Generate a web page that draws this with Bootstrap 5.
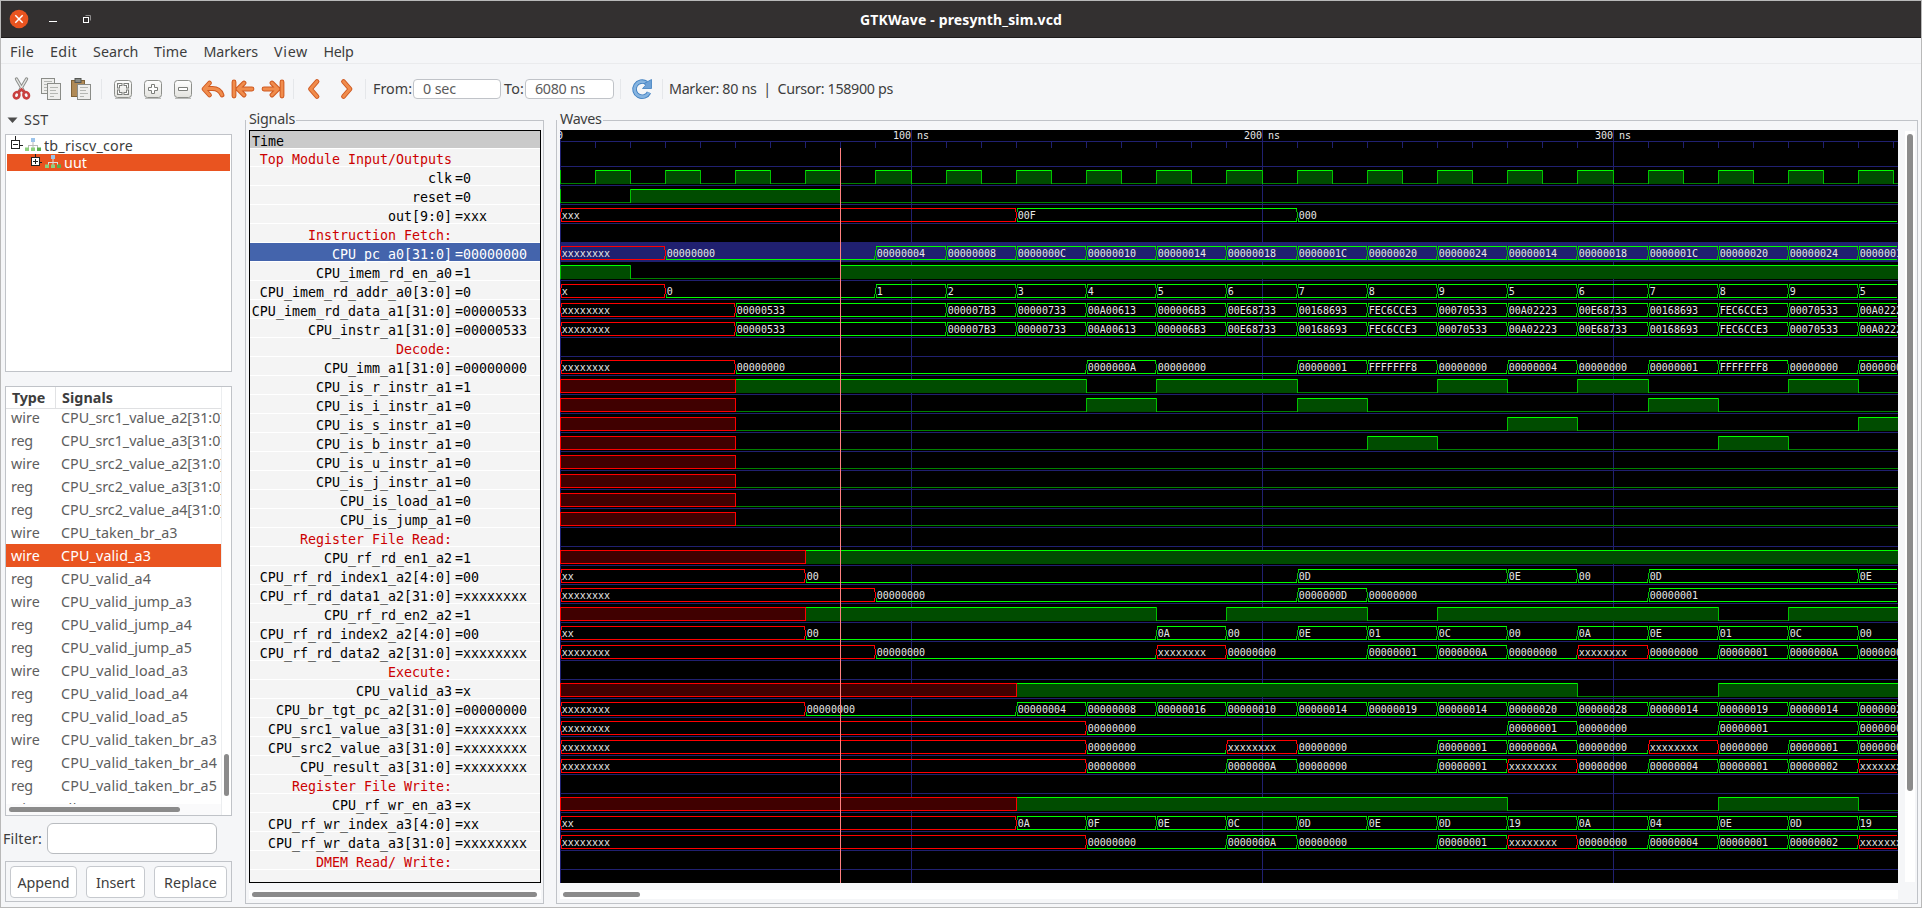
<!DOCTYPE html>
<html lang="en">
<head>
<meta charset="utf-8">
<title>GTKWave - presynth_sim.vcd</title>
<link href="https://cdn.jsdelivr.net/npm/bootstrap@5.3.0/dist/css/bootstrap.min.css" rel="stylesheet">
<script src="https://cdn.jsdelivr.net/npm/bootstrap@5.3.0/dist/js/bootstrap.bundle.min.js"></script>
<style>
  :root { --win:#f5f6f8; --line:#c0c3c8; --ink:#3d3d3d; --orange:#e95420; }
  body { width:1922px; height:908px; overflow:hidden; background:var(--win); color:var(--ink);
         font-family:"Noto Sans","Open Sans",sans-serif; font-size:14.3px; line-height:20px; }
  .window { width:1922px; height:908px; border:1px solid #b9b9b9; }
  .titlebar { height:37px; background:#333030; border-bottom:1px solid #1d1b1b; color:#fff; }
  .titlebar .title { left:859px; top:9px; font-weight:700; font-size:14px; }
  .menus { height:26px; border-bottom:1px solid #eaebed; }
  .menus span { line-height:27px; height:25px; }
  .tools { height:44px; }
  .tools > .fit, .tools > .entry, .tools > .vsep { margin-top:5px; }
  .tools svg, .titlebar svg { display:block; flex:none; }
  .vsep { width:1px; height:20px; background:#e5e7ea; flex:none; }
  .entry { height:20px; border:1px solid var(--line); border-radius:4px; background:#fff; color:#5c5c5c; line-height:18px; padding-left:9px; flex:none; }
  .fit { white-space:pre; display:inline-block; flex:none; }
  .side { width:244px; flex:none; padding-left:4px; }
  .sst { height:26px; }
  .tree { width:227px; height:238px; border:1px solid var(--line); background:#fff; padding:1px 1px 0 1px; }
  .tree .node { height:17px; }
  .tree .node.sel { height:17px; margin-top:1px; background:var(--orange); color:#fff; }
  .siglist { width:227px; height:430px; margin-top:14px; border:1px solid var(--line); background:#fff; }
  .siglist .hd { height:22px; border-bottom:1px solid #dfe0e2; font-weight:700; line-height:22px; }
  .siglist .hd .c1 { width:50px; padding-left:6px; border-right:1px solid #e1e2e4; }
  .siglist .rows { height:395px; overflow:hidden; color:#5e5e5e; }
  .siglist .rows > div { height:23px; line-height:24px; }
  .siglist .rows > div:first-child { margin-top:-3px; }
  .siglist .rows .c1 { width:55px; padding-left:5px; flex:none; }
  .siglist .rows .sel { background:var(--orange); color:#fff; }
  .vtrack { width:10px; background:#fff; border-left:1px solid #eceef0; flex:none; }
  .thumb { background:#8b8b8b; border-radius:3px; }
  .btnbox { width:227px; height:41px; border:1px solid var(--line); margin-top:7px; padding:4px 4px; }
  .gbtn { height:32px; border:1px solid #c6c9ce; border-radius:4px; background:#fff; color:var(--ink); padding:0; line-height:27px; text-align:center; }
  .pane { border:1px solid var(--line); margin-top:12px; height:784px; flex:none; }
  .pane .cap { background:var(--win); height:20px; margin-top:-14px; padding:0 1px; align-self:flex-start; line-height:24px; }
  .names { width:292px; height:753px; border:1px solid #000; background:#f4f4f4; margin:3px 0 0 3px;
           font-family:"DejaVu Sans Mono",monospace; font-size:13.3px; color:#000; }
  .names > div { height:19px; line-height:23px; border-bottom:1px solid #fff; white-space:pre; }
  .names .nm { width:202px; text-align:right; margin-right:3px; flex:none; }
  .names > .time { height:18px; line-height:21px; background:#cacaca; padding-left:2px; }
  .names > .short { height:18px; line-height:21px; }
  .names .cm { color:#cc0000; }
  .names .sel { background:#4464ac; color:#fff; }
  .wave text { font-family:"DejaVu Sans Mono",monospace; font-size:10px; fill:#e8e8e8; white-space:pre; }
  .track { background:#fff; height:9px; padding:2px 3px; }
</style>
</head>
<body>
<div class="window d-flex flex-column">
  <header class="titlebar position-relative d-flex align-items-center">
    <svg width="100" height="36" viewBox="1 1 100 36">
      <circle cx="19" cy="19" r="9.3" fill="#e95420"/>
      <path d="M15.3 15.3l7.4 7.4M22.7 15.3l-7.4 7.4" stroke="#fff" stroke-width="1.5"/>
      <path d="M49 21.5h8" stroke="#fff"/>
      <path d="M85.5 15.5h5v5" fill="none" stroke="#8f8d8d"/><rect x="83.5" y="17.5" width="5" height="5" fill="none" stroke="#fff"/>
    </svg>
    <span class="title fit position-absolute" data-w="202">GTKWave - presynth_sim.vcd</span>
  </header>
  <nav class="menus d-flex" id="menus"></nav>
  <div class="tools d-flex align-items-center" id="tools">
    <svg width="370" height="44" viewBox="1 64 370 44">
      <defs>
        <linearGradient id="kb" x1="0" y1="0" x2="0" y2="1"><stop offset="0" stop-color="#fff"/><stop offset="1" stop-color="#e2e2de"/></linearGradient>
      </defs>
      <!-- cut -->
      <path d="M16.5 79l7 12M26.5 79l-7 12" stroke="#8c8e8b" stroke-width="3.4" stroke-linecap="round"/>
      <path d="M16.5 79l7 12M26.5 79l-7 12" stroke="#e6e7e5" stroke-width="1.4" stroke-linecap="round"/>
      <g fill="none" stroke="#c9403f" stroke-width="2.6"><ellipse cx="16.6" cy="95.2" rx="2.7" ry="3.2" transform="rotate(25 16.6 95.2)"/><ellipse cx="26.2" cy="95.2" rx="2.7" ry="3.2" transform="rotate(-25 26.2 95.2)"/><path d="M18.5 92l3-2.5 3 2.5"/></g>
      <!-- copy -->
      <g stroke="#8a8c88" fill="#eeeeec"><rect x="41.5" y="78.5" width="13" height="15"/><rect x="47.5" y="83.5" width="13" height="16"/></g>
      <path d="M44 81.5h8M44 84.5h3M44 87.5h3M44 90.5h3M50 87.5h8M50 90.5h6M50 93.5h8M50 96.5h4" stroke="#b4b6b2"/>
      <!-- paste -->
      <rect x="71.5" y="80.5" width="13" height="16" fill="#b08a56" stroke="#7f6238"/><rect x="75" y="78.5" width="6" height="4" fill="#8a8c88" stroke="#555753"/>
      <rect x="77.5" y="84.5" width="13" height="15" fill="#eeeeec" stroke="#8a8c88"/><path d="M80 87.5h8M80 90.5h6M80 93.5h8M80 96.5h4" stroke="#b4b6b2"/>
      <path d="M101.5 79v20M293.5 79v20M365.5 79v20" stroke="#e5e7ea"/>
      <!-- zoom fit / in / out -->
      <g fill="url(#kb)" stroke="#8d8f8b"><rect x="114.5" y="80.5" width="17" height="17" rx="3"/><rect x="144.5" y="80.5" width="17" height="17" rx="3"/><rect x="174.5" y="80.5" width="17" height="17" rx="3"/></g>
      <path d="M115 98.5h16M145 98.5h16M175 98.5h16" stroke="#b9bab8"/>
      <g fill="none" stroke-linecap="square"><path id="fitc" d="M118.500 87v-2.500h2.500M125 84.500h2.500v2.500M118.500 91v2.500h2.500M125 93.500h2.500v-2.500" stroke="#7c7e7a" stroke-width="3"/><path d="M118.500 87v-2.500h2.500M125 84.500h2.500v2.500M118.500 91v2.500h2.500M125 93.500h2.500v-2.500" stroke="#fff" stroke-width="1"/></g>
      <g fill="#fff" stroke="#7c7e7a"><path d="M151.500 84.500h3v3h3v3h-3v3h-3v-3h-3v-3h3zM178.500 87.500h9v3h-9z"/></g>
      <!-- history and edge arrows -->
      <g fill="none" stroke-linecap="round" stroke-linejoin="round">
        <g stroke="#cf5a22" stroke-width="4.8"><path d="M209.500 83l-5.500 6 5.500 6M205 88.500h7.500q7 0 9.500 6.500"/><path d="M234 82v14M244 83l-6 6 6 6M239 89h13M282 82v14M272 83l6 6-6 6M277 89h-13"/><path d="M317 81.500l-6.500 7.500 6.500 7.500M343.500 81.500l6.500 7.500-6.500 7.500"/></g>
        <g stroke="#f08c4c" stroke-width="2.800"><path d="M209.500 83l-5.500 6 5.500 6M205 88.500h7.500q7 0 9.500 6.500"/><path d="M234 82v14M244 83l-6 6 6 6M239 89h13M282 82v14M272 83l6 6-6 6M277 89h-13"/><path d="M317 81.500l-6.500 7.500 6.500 7.500M343.500 81.500l6.500 7.500-6.500 7.500"/></g>
      </g>
    </svg>
    <span class="fit" data-w="39" style="margin-left:2px">From:</span>
    <div class="entry" style="width:88px;margin-left:1px"><span class="fit" data-w="33">0 sec</span></div>
    <span class="fit" data-w="20" style="margin-left:3px">To:</span>
    <div class="entry" style="width:89px;margin-left:1px"><span class="fit" data-w="50">6080 ns</span></div>
    <span class="vsep" style="margin-left:6px"></span>
    <svg width="24" height="24" viewBox="0 0 24 24" style="margin-left:9px;margin-top:6px">
      <path d="M19 15.500a7.600 7.600 0 1 1-2.500-9.600" fill="none" stroke="#3f7fc0" stroke-width="4.600"/>
      <path d="M19 15.500a7.600 7.600 0 1 1-2.500-9.600" fill="none" stroke="#86b4e0" stroke-width="2.800"/>
      <path d="M21.500 2.500v9h-9l3-3.200-1-2z" fill="#6da1d6" stroke="#3f7fc0" stroke-width=".8"/>
    </svg>
    <span class="vsep" style="margin-left:8px"></span>
    <span class="fit" data-w="224" style="margin-left:6px">Marker: 80 ns  |  Cursor: 158900 ps</span>
  </div>

  <main class="d-flex">
    <aside class="side">
      <div class="sst d-flex align-items-center"><svg width="15" height="12" style="margin-left:1px;margin-top:-3px"><path d="M1.500 3.500h10l-5 5.500z" fill="#4c4c4c"/></svg><span class="fit" data-w="24.500" style="margin-left:3px;margin-top:-2px">SST</span></div>
      <div class="tree" id="tree">
        <div class="node d-flex"><svg width="36" height="17" viewBox="7 136 36 17" class="flex-shrink-0"><path d="M15.500 136v4M20 145.500h3" stroke="#222"/><rect x="11.500" y="140.500" width="8" height="8" fill="#fff" stroke="#222"/><path d="M13 144.500h5" stroke="#222"/><g transform="translate(25 138)"><path d="M3 7.500h10M8 4v6M3.500 7v3M12.500 7v3" stroke="#bbb"/><rect x="6" width="4" height="4" fill="#9cc4ec"/><path d="M0 9.500h4v3.500H0zM6 9.500h4v3.500H6z" fill="#8ed07e"/><path d="M12 9.500h4v3.500h-4z" fill="#5cae4c"/></g></svg><span class="fit" data-w="89" style="margin-left:1px;line-height:20px">tb_riscv_core</span></div>
        <div class="node sel d-flex position-relative"><svg width="56" height="17" viewBox="7 154 56 17" class="flex-shrink-0"><path d="M35.500 154v3M39 162.500h3" stroke="#222"/><rect x="31.500" y="157.500" width="8" height="8" fill="#fff" stroke="#222"/><path d="M33 161.500h5M35.500 159v5" stroke="#222"/><g transform="translate(45 155)"><path d="M3 7.500h10M8 4v6M3.500 7v3M12.500 7v3" stroke="#ddd"/><rect x="6" width="4" height="4" fill="#9cc4ec"/><path d="M0 9.500h4v3.500H0zM6 9.500h4v3.500H6z" fill="#8ed07e"/><path d="M12 9.500h4v3.500h-4z" fill="#5cae4c"/></g></svg><span class="fit" data-w="23" style="margin-left:1px;line-height:18px">uut</span></div>
      </div>
      <div class="siglist d-flex">
        <div class="flex-grow-1 overflow-hidden">
          <div class="hd d-flex"><div class="c1"><span class="fit" data-w="33">Type</span></div><span class="fit" data-w="51" style="margin-left:6px">Signals</span></div>
          <div class="rows" id="rows"></div>
          <div style="height:11px;background:#fafafb;padding:3px 0 0 3px"><div class="thumb" style="width:171px;height:5px"></div></div>
        </div>
        <div class="vtrack"><div class="thumb" style="width:5px;height:42px;margin:367px 0 0 2px"></div></div>
      </div>
      <div class="d-flex align-items-center" style="margin:7px 0 0 -2px;height:31px"><span class="fit" data-w="39">Filter:</span><div class="bg-white rounded" style="width:170px;height:31px;margin-left:5px;border:1px solid #b9bcc0"></div></div>
      <div class="btnbox d-flex" id="btns"></div>
    </aside>

    <section class="pane d-flex flex-column" style="width:299px">
      <div class="cap"><span class="fit" data-w="46" style="margin-left:2px">Signals</span></div>
      <div class="names flex-shrink-0" id="names"></div>
      <div class="track" style="width:292px;margin:7px 0 0 3px"><div class="thumb" style="height:5px;width:285px"></div></div>
    </section>

    <section class="pane d-flex flex-column" style="width:1362px;margin-left:12px">
      <div class="cap"><span class="fit" data-w="41.500" style="margin-left:2px">Waves</span></div>
      <div class="d-flex" style="margin:3px 0 0 3px">
        <div>
          <svg class="wave d-block" id="wave" width="1338" height="753" viewBox="560 130 1338 753"></svg>
          <div class="track" style="width:1338px;margin-top:7px"><div class="thumb" style="height:5px;width:77px"></div></div>
        </div>
        <div class="bg-white" style="width:10px;height:751px;margin:1px 0 0 7px;padding:3px 2px"><div class="thumb" style="width:6px;height:657px"></div></div>
      </div>
    </section>
  </main>
</div>

<script>
const H = s => s.replace(/&/g, '&amp;').replace(/</g, '&lt;');

// menu bar: label, left edge, width
let pos = 1;
document.getElementById('menus').innerHTML = [['File',10,24],['Edit',50,27],['Search',93,45.5],['Time',154,33.5],['Markers',203.5,54.5],['View',274,34],['Help',323.5,30]]
  .map(([t,x,w]) => { const m = x - pos; pos = x + w; return `<span class="fit" data-w="${w}" style="margin-left:${m}px">${t}</span>`; }).join('');

// signals found in the selected scope
document.getElementById('rows').innerHTML = [
  ['wire','CPU_src1_value_a2[31:0]',164],['reg','CPU_src1_value_a3[31:0]',164],['wire','CPU_src2_value_a2[31:0]',164],['reg','CPU_src2_value_a3[31:0]',164],
  ['reg','CPU_src2_value_a4[31:0]',164],['wire','CPU_taken_br_a3',116.5],['wire','CPU_valid_a3',90],['reg','CPU_valid_a4',90],['wire','CPU_valid_jump_a3',131],
  ['reg','CPU_valid_jump_a4',131],['reg','CPU_valid_jump_a5',131],['wire','CPU_valid_load_a3',127],['reg','CPU_valid_load_a4',127],['reg','CPU_valid_load_a5',127],
  ['wire','CPU_valid_taken_br_a3',156],['reg','CPU_valid_taken_br_a4',156],['reg','CPU_valid_taken_br_a5',156],['wire','clk',20]]
  .map(([t,n,w]) => `<div class="d-flex${n === 'CPU_valid_a3' ? ' sel' : ''}"><div class="c1"><span class="fit" data-w="${t === 'wire' ? 29 : 22}">${t}</span></div><span class="fit" data-w="${w}">${n}</span></div>`).join('');

document.getElementById('btns').innerHTML = [['Append',67,52,0],['Insert',59,39,9],['Replace',73,53,9]]
  .map(([t,w,tw,m]) => `<button class="gbtn flex-shrink-0" style="width:${w}px;margin-left:${m}px"><span class="fit" data-w="${tw}">${t}</span></button>`).join('');

// trace table: kind c = comment, d = digital, b = bus; samples are "time:value"
const INS = '0:xxxxxxxx 50:00000533 110:000007B3 130:00000733 150:00A00613 170:000006B3 190:00E68733 210:00168693 230:FEC6CCE3 250:00070533 270:00A02223 290:00E68733 310:00168693 330:FEC6CCE3 350:00070533 370:00A02223';
const RES = '0:xxxxxxxx 150:00000000 190:0000000A 210:00000000 250:00000001 270:xxxxxxxx 290:00000000 310:00000004 330:00000001 350:00000002 370:xxxxxxxx';
let clk = '0:0'; for (let t = 10; t < 390; t += 10) clk += ` ${t}:${(t / 10) % 2}`;
const T = [
 ['c','Top Module Input/Outputs'],
 ['d','clk','0',clk],
 ['d','reset','0','0:0 20:1 80:0'],
 ['b','out[9:0]','xxx','0:xxx 130:00F 210:000'],
 ['c','Instruction Fetch:'],
 ['b','CPU_pc_a0[31:0]','00000000','0:xxxxxxxx 30:00000000 90:00000004 110:00000008 130:0000000C 150:00000010 170:00000014 190:00000018 210:0000001C 230:00000020 250:00000024 270:00000014 290:00000018 310:0000001C 330:00000020 350:00000024 370:00000014'],
 ['d','CPU_imem_rd_en_a0','1','0:1 20:0 80:1'],
 ['b','CPU_imem_rd_addr_a0[3:0]','0','0:x 30:0 90:1 110:2 130:3 150:4 170:5 190:6 210:7 230:8 250:9 270:5 290:6 310:7 330:8 350:9 370:5'],
 ['b','CPU_imem_rd_data_a1[31:0]','00000533',INS],
 ['b','CPU_instr_a1[31:0]','00000533',INS],
 ['c','Decode:'],
 ['b','CPU_imm_a1[31:0]','00000000','0:xxxxxxxx 50:00000000 150:0000000A 170:00000000 210:00000001 230:FFFFFFF8 250:00000000 270:00000004 290:00000000 310:00000001 330:FFFFFFF8 350:00000000 370:00000004'],
 ['d','CPU_is_r_instr_a1','1','0:x 50:1 150:0 170:1 210:0 250:1 270:0 290:1 310:0 350:1 370:0'],
 ['d','CPU_is_i_instr_a1','0','0:x 50:0 150:1 170:0 210:1 230:0 310:1 330:0'],
 ['d','CPU_is_s_instr_a1','0','0:x 50:0 270:1 290:0 370:1'],
 ['d','CPU_is_b_instr_a1','0','0:x 50:0 230:1 250:0 330:1 350:0'],
 ['d','CPU_is_u_instr_a1','0','0:x 50:0'],
 ['d','CPU_is_j_instr_a1','0','0:x 50:0'],
 ['d','CPU_is_load_a1','0','0:x 50:0'],
 ['d','CPU_is_jump_a1','0','0:x 50:0'],
 ['c','Register File Read:'],
 ['d','CPU_rf_rd_en1_a2','1','0:x 70:1'],
 ['b','CPU_rf_rd_index1_a2[4:0]','00','0:xx 70:00 210:0D 270:0E 290:00 310:0D 370:0E'],
 ['b','CPU_rf_rd_data1_a2[31:0]','xxxxxxxx','0:xxxxxxxx 90:00000000 210:0000000D 230:00000000 310:00000001'],
 ['d','CPU_rf_rd_en2_a2','1','0:x 70:1 170:0 190:1 230:0 250:1 330:0 350:1'],
 ['b','CPU_rf_rd_index2_a2[4:0]','00','0:xx 70:00 170:0A 190:00 210:0E 230:01 250:0C 270:00 290:0A 310:0E 330:01 350:0C 370:00'],
 ['b','CPU_rf_rd_data2_a2[31:0]','xxxxxxxx','0:xxxxxxxx 90:00000000 170:xxxxxxxx 190:00000000 230:00000001 250:0000000A 270:00000000 290:xxxxxxxx 310:00000000 330:00000001 350:0000000A 370:00000000'],
 ['c','Execute:'],
 ['d','CPU_valid_a3','x','0:x 130:1 290:0 330:1'],
 ['b','CPU_br_tgt_pc_a2[31:0]','00000000','0:xxxxxxxx 70:00000000 130:00000004 150:00000008 170:00000016 190:00000010 210:00000014 230:00000019 250:00000014 270:00000020 290:00000028 310:00000014 330:00000019 350:00000014 370:00000020'],
 ['b','CPU_src1_value_a3[31:0]','xxxxxxxx','0:xxxxxxxx 150:00000000 270:00000001 290:00000000 330:00000001 370:00000002'],
 ['b','CPU_src2_value_a3[31:0]','xxxxxxxx','0:xxxxxxxx 150:00000000 190:xxxxxxxx 210:00000000 250:00000001 270:0000000A 290:00000000 310:xxxxxxxx 330:00000000 350:00000001 370:00000002'],
 ['b','CPU_result_a3[31:0]','xxxxxxxx',RES],
 ['c','Register File Write:'],
 ['d','CPU_rf_wr_en_a3','x','0:x 130:1 270:0 330:1 370:0'],
 ['b','CPU_rf_wr_index_a3[4:0]','xx','0:xx 130:0A 150:0F 170:0E 190:0C 210:0D 230:0E 250:0D 270:19 290:0A 310:04 330:0E 350:0D 370:19'],
 ['b','CPU_rf_wr_data_a3[31:0]','xxxxxxxx',RES],
 ['c','DMEM Read/ Write:']
];

document.getElementById('names').innerHTML = '<div class="time">Time</div>' + T.map(([k,n,v], i) =>
  `<div class="d-flex${i === 0 ? ' short' : ''}${i === 5 ? ' sel' : ''}"><span class="nm${k === 'c' ? ' cm' : ''}">${H(n)}</span>${k === 'c' ? '' : '<span>=' + v + '</span>'}</div>`).join('');

// waveform canvas
const X = t => 560 + Math.floor(3.51 * t + 0.001), END = 1898;
const out = [];
const R = (x, y, w, h, c) => { if (w > 0) out.push(`<rect x="${x}" y="${y}" width="${w}" height="${h}" fill="${c}"/>`); };
const TX = (x, y, s) => out.push(`<text x="${x}" y="${y}">${s}</text>`);
const BLUE = '#202070', HI = '#00ff00', MID = '#00c000', LOW = '#008000', RED = '#ff0000';
R(560, 130, 1338, 753, '#000');
R(560, 141, 1338, 1, BLUE);
for (let t = 0; t < 390; t += 10) R(X(t), 141, 1, 7, BLUE);
T.forEach((r, i) => R(560, 166 + 19 * i, 1338, 1, BLUE));
R(560, 242, 1338, 20, BLUE);
[0, 100, 200, 300].forEach(t => R(X(t), 130, 1, 753, BLUE));
TX(557, 139, '0');
[100, 200, 300].forEach(t => TX(X(t) - 18, 139, t + ' ns'));
T.forEach(([k, , , data], i) => {
  if (k === 'c') return;
  const base = 166 + 19 * i, top = base - 15, bot = base - 2;
  const s = data.split(' ').map(e => e.split(':')).map(([t, v]) => ({ x: X(+t), v }));
  s.forEach((e, j) => {
    const nx = s[j + 1] ? s[j + 1].x : END, last = !s[j + 1], prev = s[j - 1];
    if (k === 'd') {
      if (e.v === '1') { R(e.x, top, nx - e.x, 14, '#004c00'); R(e.x, top, nx - e.x, 1, HI); }
      if (e.v === '0') R(e.x, bot, nx - e.x, 1, LOW);
      if (e.v === 'x') { R(e.x, top, nx - e.x, 14, '#400000'); R(e.x, top, nx - e.x, 1, RED); R(e.x, bot, nx - e.x, 1, RED); R(e.x, top, 1, 14, RED); }
      else R(e.x, top, 1, 14, prev && prev.v === 'x' ? RED : MID);
    } else {
      const isx = e.v[0] === 'x', zero = /^0+$/.test(e.v), c = isx ? RED : HI, cv = isx ? RED : MID;
      const a = e.x + 1, b = last ? END - 1 : nx;
      if (!zero) R(a, top, b - a, 1, c);
      R(a, bot, b - a, 1, c);
      R(e.x, top + 4, 1, 6, prev && prev.v[0] === 'x' ? RED : cv);
      if (!zero) R(a, top + 1, 1, 3, cv);
      R(a, bot - 3, 1, 3, cv);
      if (!last) { if (!zero) R(nx - 1, top + 1, 1, 3, cv); R(nx - 1, bot - 3, 1, 3, cv); }
      TX(e.x + 1.8, base - 4, e.v);
    }
  });
});
R(840, 148, 1, 735, '#ff8080');
document.getElementById('wave').innerHTML = '<g shape-rendering="crispEdges">' + out.join('') + '</g>';

// fit each label to its measured width
document.querySelectorAll('.fit').forEach(e => {
  const w = +e.dataset.w, cur = e.getBoundingClientRect().width, n = e.textContent.length;
  e.style.letterSpacing = ((w - cur) / n).toFixed(3) + 'px';
});
</script>
</body>
</html>
